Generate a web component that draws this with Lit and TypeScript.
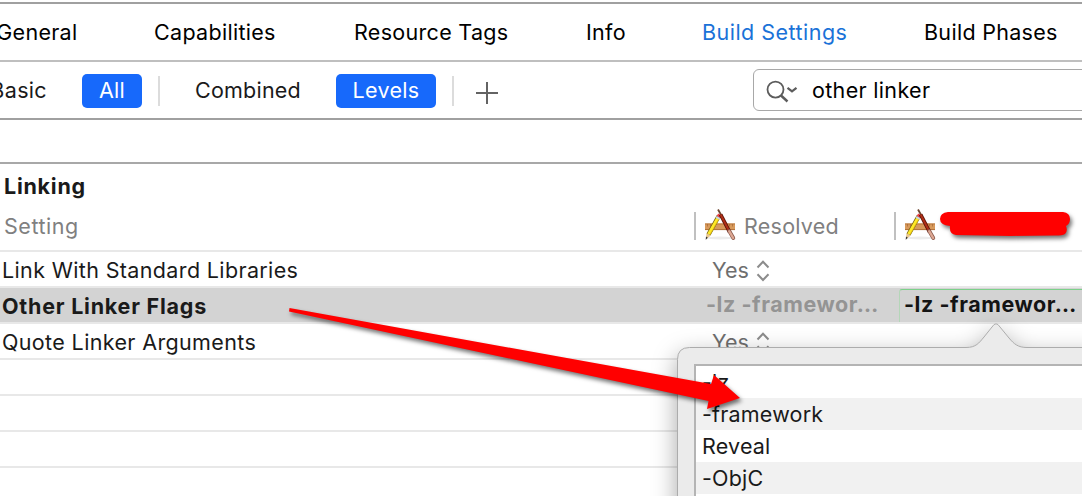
import { LitElement, html, css, svg } from "lit";
import { customElement } from "lit/decorators.js";
import { classMap } from "lit/directives/class-map.js";

@customElement("app-glyph")
class AppGlyph extends LitElement {
  static styles = css`:host { display: block; width: 32px; height: 32px; } svg { display: block; }`;
  render() {
    return html`<svg width="32" height="32" viewBox="0 0 32 32">
      <ellipse cx="16" cy="29" rx="13" ry="1.4" fill="#ececec"/>
      <rect x="1" y="14.500" width="30" height="6.500" fill="#d89a5c"/>
      <path d="M1 15H31" stroke="#b97a40" stroke-width="1"/>
      <path d="M1 20.600H31" stroke="#b0703a" stroke-width="1"/>
      <path d="M3.500 15v2.500M6.500 15v2.500M9.500 15v2.500M22.500 15v2.500M25.500 15v2.500M28.500 15v2.500" stroke="#a86c38" stroke-width=".8"/>
      <path d="M14.800 7L4.500 25.500" stroke="#6b5a10" stroke-width="4.400"/>
      <path d="M14.200 8.500L4.700 25.300" stroke="#ffe928" stroke-width="3.200"/>
      <path d="M15.300 9L6 25.500" stroke="#d9ac00" stroke-width=".6"/>
      <path d="M15.900 5.500L14.500 8" stroke="#f04048" stroke-width="4"/>
      <path d="M14.500 8L13.500 9.800" stroke="#c9d4e4" stroke-width="4"/>
      <path d="M2.400 24.200L6.700 26.600L2 30.500Z" fill="#e9c68c"/>
      <path d="M2 27.600L3.800 28.800L1.700 30.800Z" fill="#333"/>
      <path d="M14 .5L17.800 7" stroke="#6e4630" stroke-width="1.800"/>
      <path d="M16.600 5.500L25.600 23" stroke="#571208" stroke-width="3.800"/>
      <path d="M16.600 5.500L25.600 23" stroke="#b03018" stroke-width="2"/>
      <path d="M25.200 22L29.300 29" stroke="#8b5a4c" stroke-width="3.800" stroke-linecap="round"/>
      <path d="M25.200 22.200L29.200 29" stroke="#dda793" stroke-width="2.400" stroke-linecap="round"/>
    </svg>`;
  }
}

const stepper = svg`<svg class="stepper" width="14" height="22" viewBox="0 0 14 22"><path d="M1.500 7.500L7 1.800L12.500 7.500M1.500 14.300L7 20L12.500 14.300" fill="none" stroke="#8c8c8c" stroke-width="2"/></svg>`;

@customElement("app-root")
class AppRoot extends LitElement {
  static styles = css`
    :host { display: block; position: relative; width: 1082px; height: 496px; overflow: hidden; background: #fff;
      font-family: Inter, "Liberation Sans", sans-serif; font-size: 21.5px; color: #1a1a1a; white-space: nowrap; letter-spacing: .33px; }
    * { box-sizing: border-box; }
    .rule { height: 4px; border-bottom: 2px solid #a0a0a0; }
    .tabs { display: grid; grid-template-columns: 154px 200px 232px 116px 222px 1fr; height: 58px;
      border-bottom: 2px solid #bfbfbf; color: #000; line-height: 56px; letter-spacing: .3px; }
    .active { color: #1a72d8; letter-spacing: .48px; }
    .first { display: flex; justify-content: flex-end; width: 77.500px; }
    .bar { display: flex; height: 58px; align-items: flex-start; border-bottom: 2px solid #a0a0a0; line-height: 33px; padding-top: 12px; }
    .bar > * { flex: none; }
    .basic { width: 47px; display: flex; justify-content: flex-end; }
    .pill { height: 34px; border-radius: 5px; background: #1769fb; color: #fff; text-align: center; }
    .all { width: 60px; margin-left: 35px; }
    .levels { width: 100px; margin-left: 35px; }
    .div { width: 2px; height: 30px; margin: 2px 0 0 16px; background: #dcdcdc; }
    .combined { width: 106px; margin-left: 35px; letter-spacing: .22px; }
    .plus { margin: 8px 0 0 22px; }
    .search { display: flex; margin: -5px 0 0 255px; width: 340px; height: 42px; border: 1px solid #a8a8a8; border-radius: 6px; color: #000; }
    .search svg { margin: 9px 0 0 12px; flex: none; }
    .query { margin-left: 12px; line-height: 40px; }
    .gap { height: 44px; border-bottom: 2px solid #a8a8a8; }
    .group { height: 44px; padding-left: 4px; font-weight: 700; line-height: 44px; letter-spacing: .75px; }
    .heads, .row { display: grid; grid-template-columns: 694px 200px 1fr; }
    .heads { height: 44px; border-bottom: 2px solid #e8e8e8; color: #808080; line-height: 36px; }
    .heads .name { padding-left: 4px; letter-spacing: .55px; }
    .col { display: flex; letter-spacing: .25px; }
    .col::before { content: ""; width: 2px; height: 28px; margin-top: 4px; background: #c0c0c0; }
    .col app-glyph { margin: 1px 8px 0 8px; }
    .row { height: 36px; border-bottom: 2px solid #e8e8e8; line-height: 36px; letter-spacing: .36px; }
    .row .name { padding-left: 2px; }
    .row .val { padding-left: 18px; color: #6e6e6e; display: flex; letter-spacing: 0; }
    .stepper { margin: 8px 0 0 7px; }
    .row.sel { background: #d3d3d3; font-weight: 700; letter-spacing: .77px; }
    .row.sel .val { padding-left: 12px; color: #949494; line-height: 33px; letter-spacing: .55px; }
    .row .edit { margin: 1px 0 2px 5px; padding-left: 4px; line-height: 29px; border-top: 1px solid #7cd08a; border-left: 1px solid #b4d6b8; border-top-left-radius: 3px; color: #141414; letter-spacing: .55px; }
    .pop { position: absolute; left: 620px; top: 280px; width: 462px; height: 216px; overflow: hidden; }
    .shape { position: absolute; left: 0; top: 0; overflow: visible; }
    .bubble { filter: drop-shadow(0 8px 12px rgba(0, 0, 0, .35)); }
    .list { position: relative; margin: 84px 0 0 74px; border: 2px solid #b4b4b4; border-right: 0; background: #fff; height: 180px; letter-spacing: .2px; }
    .item { height: 32px; line-height: 33px; padding-left: 6px; }
    .item:nth-child(even) { background: #f1f1f1; }
    .marks { position: absolute; left: 0; top: 0; filter: drop-shadow(2px 3px 2px rgba(0, 0, 0, .55)); }
  `;

  tabs = ["General", "Capabilities", "Resource Tags", "Info", "Build Settings", "Build Phases"];
  flags = ["-lz", "-framework", "Reveal", "-ObjC", ""];

  render() {
    return html`
      <div class="rule"></div>
      <nav class="tabs">${this.tabs.map((t, i) => html`<span class=${classMap({ first: i === 0, active: i === 4 })}>${t}</span>`)}</nav>
      <div class="bar">
        <span class="basic">Basic</span><span class="pill all">All</span><i class="div"></i>
        <span class="combined">Combined</span><span class="pill levels">Levels</span><i class="div"></i>
        <svg class="plus" width="22" height="22" viewBox="0 0 22 22"><path d="M0 11H22M11 0V22" stroke="#636363" stroke-width="2"/></svg>
        <div class="search">
          <svg width="34" height="24" viewBox="0 0 34 24"><g fill="none" stroke="#5c5c5c"><circle cx="9.500" cy="10.600" r="8" stroke-width="1.800"/><path d="M15 16.500L21.500 22.500" stroke-width="2.400"/><path d="M21.500 8.800L26 12.400L30.500 8.800" stroke-width="2.200"/></g></svg>
          <span class="query">other linker</span>
        </div>
      </div>
      <div class="gap"></div>
      <div class="group">Linking</div>
      <div class="heads"><span class="name">Setting</span>
        <span class="col"><app-glyph></app-glyph>Resolved</span><span class="col"><app-glyph></app-glyph></span></div>
      <div class="row"><span class="name">Link With Standard Libraries</span><span class="val">Yes${stepper}</span></div>
      <div class="row sel"><span class="name">Other Linker Flags</span><span class="val">-lz -framewor…</span><span class="edit">-lz -framewor…</span></div>
      <div class="row"><span class="name">Quote Linker Arguments</span><span class="val">Yes${stepper}</span></div>
      <div class="row"></div><div class="row"></div><div class="row"></div>
      <div class="pop">
        <svg class="shape" width="462" height="216" viewBox="620 280 462 216">
          <path class="bubble" d="M677.500 540V359.500Q677.500 347.500 689.500 347.500H966C976 347.500 979 343 984 337L992 327Q996 320.500 1000 327L1009 338C1014 344 1018 347.500 1027 347.500H1120V540Z" fill="#ebebeb" stroke="#acacac"/>
        </svg>
        <div class="list">${this.flags.map((f) => html`<div class="item">${f}</div>`)}</div>
      </div>
      <svg class="marks" width="1082" height="496" viewBox="0 0 1082 496">
        <path d="M289.500 308L711 384L714 375L740 398L707 409L708.500 401L289 311.500Z" fill="#f00"/>
        <path d="M948 212H1063Q1070 213 1070 219Q1070 224 1066 226Q1068 231 1065 234Q1062 235.500 1056 235.500L1010 236L956 235Q949 234 950 226Q940 225 940 219Q940 213 948 212Z" fill="#f00"/>
      </svg>`;
  }
}
